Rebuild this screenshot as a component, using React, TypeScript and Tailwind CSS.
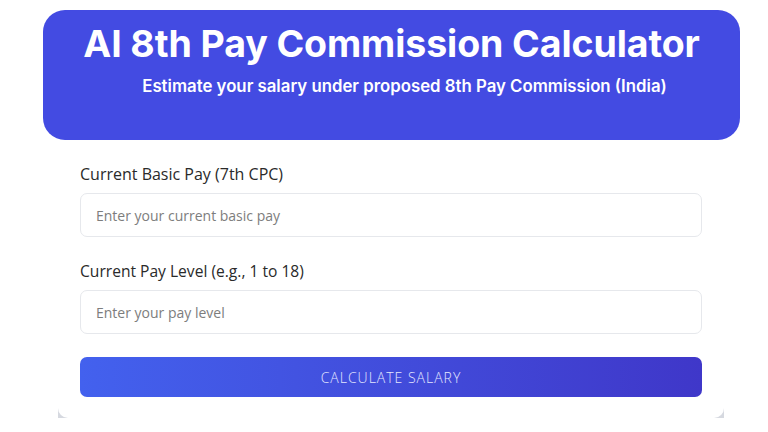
export default function App() {
  return (
    <div className="min-h-screen bg-white pt-[10px] font-['Inter',sans-serif]">
      {/* Header */}
      <div className="ml-[43px] flex h-[130px] w-[697px] flex-col items-center rounded-[22px] bg-[#434be2] pt-[11px] text-white">
        <h1 className="text-[37.5px] leading-[46px] font-bold tracking-[-0.1px]">
          AI 8th Pay Commission Calculator
        </h1>
        <p className="mt-[8px] pl-[26px] text-[16.8px] leading-[22px] font-semibold">
          Estimate your salary under proposed 8th Pay Commission (India)
        </p>
      </div>

      {/* Form card */}
      <div className="ml-[58px] w-[666px] bg-[#d6d9e0]">
        <div className="flex flex-col rounded-b-[10px] bg-white px-[22px] pt-[23px] pb-[21px] font-['Open_Sans',sans-serif]">
          <label className="mb-[8px] text-[16px] leading-[22px] text-[#2a2a2a]">
            Current Basic Pay (7th CPC)
          </label>
          <input
            type="text"
            placeholder="Enter your current basic pay"
            className="h-[44px] w-full rounded-[7px] border border-[#e6e8ec] px-[15px] text-[14px] text-gray-700 outline-none placeholder:text-[#7d7d7d]"
          />

          <label className="mt-[23px] mb-[8px] text-[15.6px] leading-[22px] text-[#2a2a2a]">
            Current Pay Level (e.g., 1 to 18)
          </label>
          <input
            type="text"
            placeholder="Enter your pay level"
            className="h-[44px] w-full rounded-[7px] border border-[#e6e8ec] px-[15px] text-[14px] text-gray-700 outline-none placeholder:text-[#7d7d7d]"
          />

          <button
            type="button"
            className="mt-[23px] h-[40px] w-full rounded-[7px] bg-gradient-to-r from-[#4361ee] to-[#3f37c9] text-[14px] font-light tracking-[1px] text-[#e4e7ff]"
          >
            CALCULATE SALARY
          </button>
        </div>
      </div>
    </div>
  );
}
